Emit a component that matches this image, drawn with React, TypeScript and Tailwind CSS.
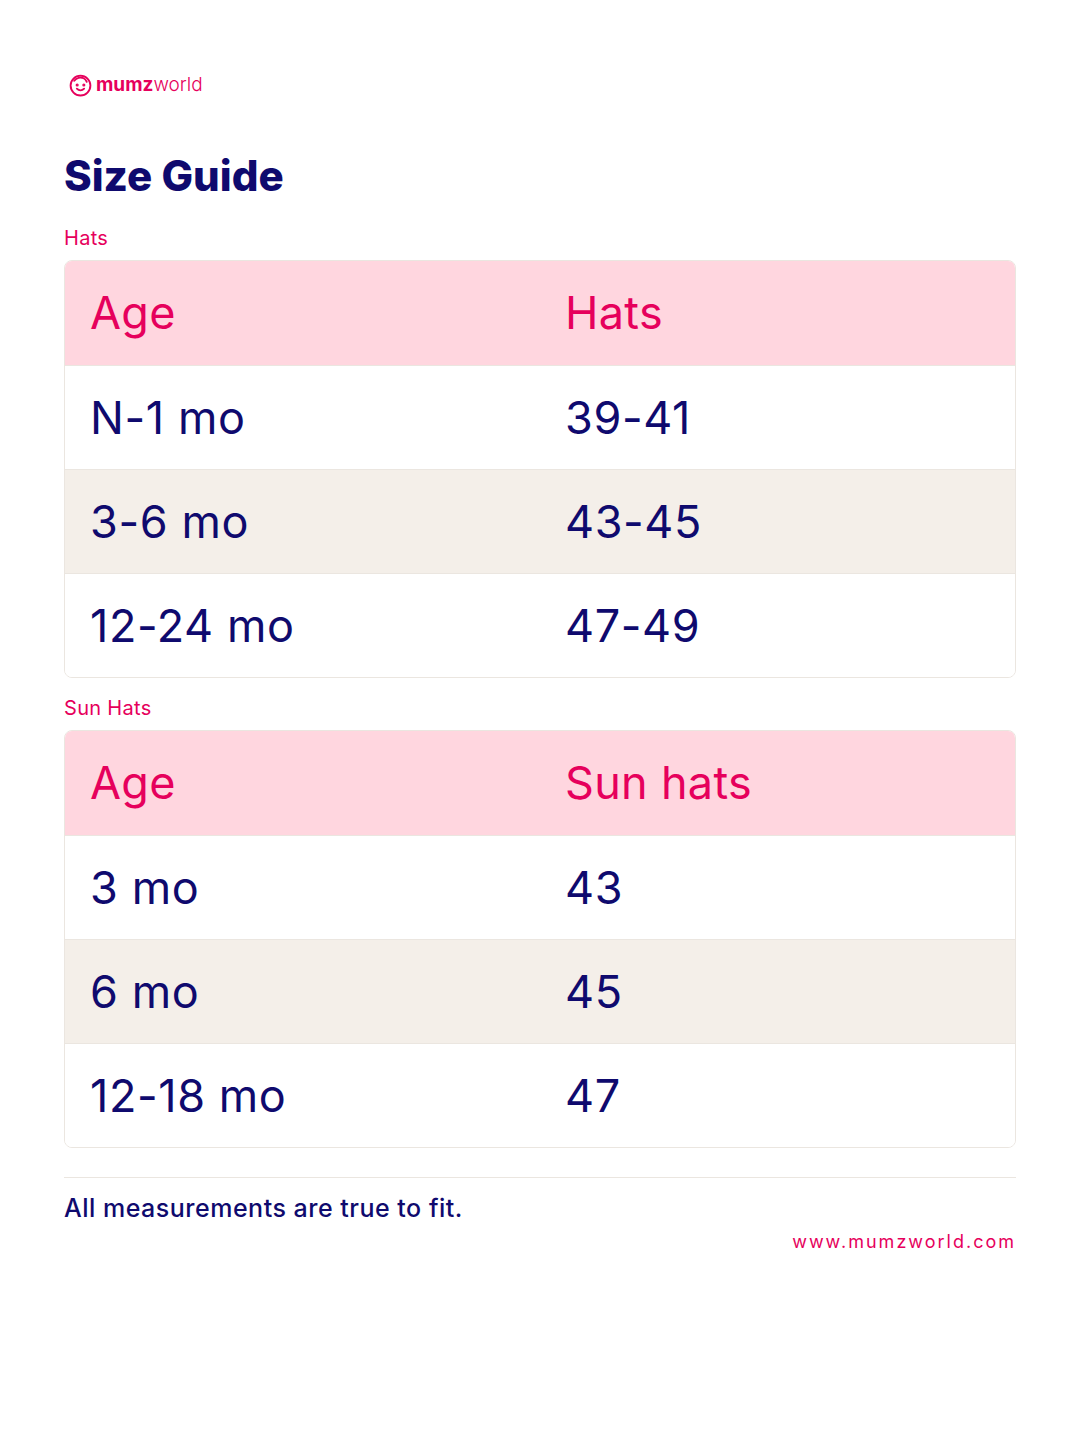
import React from 'react';

const pink = 'text-[#e6005c]';
const navy = 'text-[#0f0a6e]';

const tables = [
  { label: 'Hats', head: 'Hats', rows: [['N-1 mo', '39-41'], ['3-6 mo', '43-45'], ['12-24 mo', '47-49']] },
  { label: 'Sun Hats', head: 'Sun hats', rows: [['3 mo', '43'], ['6 mo', '45'], ['12-18 mo', '47']] },
];

const Logo = () => (
  <div className="flex items-center gap-[3px]">
    <svg width="25" height="25" viewBox="0 0 24 24" fill="none" stroke="#e6005c" strokeWidth="1.8" strokeLinecap="round">
      <circle cx="12" cy="13" r="9.5" />
      <path d="M6 8.5c2-3 6-4 9-2.5c1.5.8 2.5 2.2 3 3.5" />
      <circle cx="8.8" cy="12.5" r="0.6" fill="#e6005c" />
      <circle cx="15.2" cy="12.5" r="0.6" fill="#e6005c" />
      <path d="M8.5 16c2 2 5 2 7 0" />
    </svg>
    <span className={`text-[19px] leading-none ${pink}`}>
      <span className="font-bold">mumz</span>
      <span className="font-light">world</span>
    </span>
  </div>
);

const SizeTable = ({ head, rows }: { head: string; rows: string[][] }) => (
  <div className="border border-[#ebe6e0] rounded-[8px] overflow-hidden">
    <div className="grid grid-cols-2 h-[104px] items-center bg-[#ffd6df] px-[25px]">
      <div className={`text-[45px] tracking-[0.3px] ${pink}`}>Age</div>
      <div className={`text-[45px] tracking-[0.3px] pl-[25px] ${pink}`}>{head}</div>
    </div>
    {rows.map((r, i) => (
      <div key={i} className={`grid grid-cols-2 h-[104px] items-center px-[25px] border-t border-[#ebe6e0] ${i === 1 ? 'bg-[#f4efe9]' : 'bg-white'}`}>
        <div className={`text-[45px] tracking-[0.6px] whitespace-pre ${navy}`}>{r[0]}</div>
        <div className={`text-[45px] tracking-[0.6px] pl-[25px] ${navy}`}>{r[1]}</div>
      </div>
    ))}
  </div>
);

export default function App() {
  return (
    <div className="w-[1080px] h-[1430px] bg-white px-[64px] pt-[72px]" style={{ fontFamily: 'Inter, "Noto Sans", sans-serif' }}>
      <div className="pl-[4px]"><Logo /></div>
      <h1 className={`mt-[58px] text-[42px] font-extrabold leading-none ${navy}`}>Size Guide</h1>
      {tables.map((t, i) => (
        <div key={i}>
          <div className={`text-[20px] leading-none tracking-[0.3px] ${pink} ${i === 0 ? 'mt-[31px]' : 'mt-[20px]'} mb-[12px]`}>{t.label}</div>
          <SizeTable head={t.head} rows={t.rows} />
        </div>
      ))}
      <div className="mt-[29px] border-t border-[#ebe6e0]" />
      <p className={`mt-[18px] text-[25px] font-medium tracking-[0.5px] leading-none ${navy}`}>All measurements are true to fit.</p>
      <p className={`mt-[12px] text-right text-[18px] tracking-[2px] leading-none ${pink}`}>www.mumzworld.com</p>
    </div>
  );
}
